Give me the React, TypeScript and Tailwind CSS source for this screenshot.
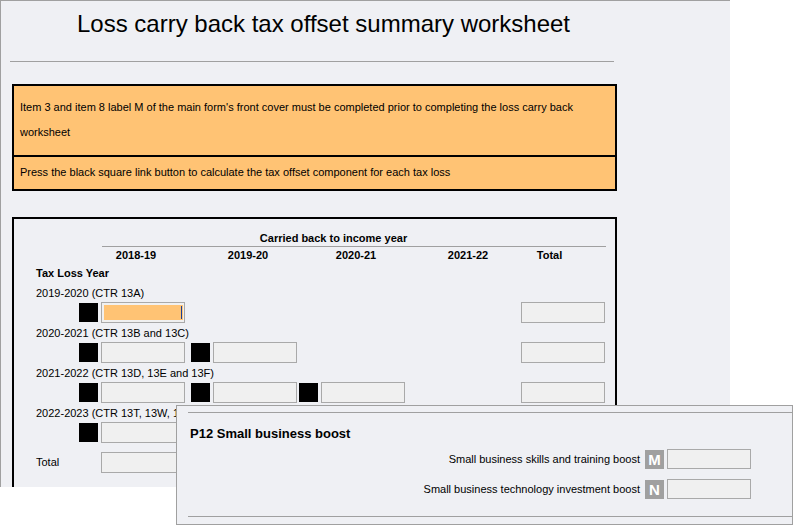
import React from 'react';

const colWidths = ['w-[112px]', 'w-[108px]', 'w-[112px]', 'w-[110px]'];

const rows = [
  { label: '2019-2020 (CTR 13A)', cols: 1 },
  { label: '2020-2021 (CTR 13B and 13C)', cols: 2 },
  { label: '2021-2022 (CTR 13D, 13E and 13F)', cols: 3 },
  { label: '2022-2023 (CTR 13T, 13W, 13X and 13Y)', cols: 4 },
];

function Field({ focused = false }: { focused?: boolean }) {
  return (
    <div className="h-[21px] w-[84px] shrink-0 border border-[#a9a9a9] bg-[#f0f0f0] pl-[2px] pt-[2px] pb-[2px] pr-[1px]">
      {focused && (
        <div className="flex h-full justify-end bg-[#ffc374]">
          <div className="mr-[1px] mt-[1px] h-[13px] w-px bg-[#1c3f94]" />
        </div>
      )}
    </div>
  );
}

function Square() {
  return <div className="h-[19px] w-[19px] shrink-0 bg-black" />;
}

function LabelBox({ letter }: { letter: string }) {
  return (
    <div className="flex h-[19px] w-[19px] shrink-0 items-center justify-center bg-[#a0a0a0] text-[15px] font-bold leading-none text-white">
      {letter}
    </div>
  );
}

export default function App() {
  return (
    <div className="relative h-[525px] w-[793px] overflow-hidden bg-white font-['Liberation_Sans',Arial,sans-serif] text-black">
      {/* Main worksheet panel */}
      <div className="h-[487px] w-[730px] overflow-hidden border-l border-t border-[#a0a0a0] bg-[#eff0f4]">
        <h1 className="mt-[9px] w-[645px] text-center text-[24px] leading-[28px]">
          Loss carry back tax offset summary worksheet
        </h1>
        <div className="ml-[9px] mt-[23px] h-px w-[604px] bg-[#a0a0a0]" />

        {/* Notes */}
        <div className="ml-[11px] mt-[22px] w-[605px] border-2 border-black bg-[#ffc374] text-[11px]">
          <div className="h-[69px] pl-[6px] pt-[9px] leading-[25px]">
            Item 3 and item 8 label M of the main form's front cover must be completed prior to completing the loss carry back
            <br />
            worksheet
          </div>
          <div className="flex h-[34px] items-center border-t-2 border-black pb-[1px] pl-[6px]">
            Press the black square link button to calculate the tax offset component for each tax loss
          </div>
        </div>

        {/* Table */}
        <div className="ml-[11px] mt-[26px] h-[300px] w-[605px] border-2 border-black pt-[12px] text-[11px]">
          <div className="ml-[88px] w-[463px] text-center font-bold leading-[15px]">Carried back to income year</div>
          <div className="ml-[88px] h-px w-[504px] bg-[#a0a0a0]" />
          <div className="flex pl-[65px] font-bold leading-[17px]">
            <div className="w-[114px] text-center">2018-19</div>
            <div className="w-[110px] text-center">2019-20</div>
            <div className="w-[106px] text-center">2020-21</div>
            <div className="w-[118px] text-center">2021-22</div>
            <div className="w-[45px] text-center">Total</div>
          </div>
          <div className="pl-[22px] font-bold leading-[18px]">Tax Loss Year</div>

          <div className="mt-[2px]">
            {rows.map((row, ri) => (
              <div key={row.label} className="mb-px">
                <div className="h-[18px] pl-[22px] leading-[18px]">{row.label}</div>
                <div className="flex h-[21px] items-center pl-[65px]">
                  {colWidths.map((w, ci) => (
                    <div key={w} className={`${w} flex items-center gap-[3px]`}>
                      {ci < row.cols && (
                        <>
                          <Square />
                          <Field focused={ri === 0 && ci === 0} />
                        </>
                      )}
                    </div>
                  ))}
                  <Field />
                </div>
              </div>
            ))}
          </div>

          <div className="mt-[9px] flex h-[21px] items-center">
            <div className="w-[65px] pl-[22px]">Total</div>
            {colWidths.map((w) => (
              <div key={w} className={`${w} flex items-center pl-[22px]`}>
                <Field />
              </div>
            ))}
            <Field />
          </div>
        </div>
      </div>

      {/* P12 overlay window */}
      <div className="absolute left-[176px] top-[405px] h-[120px] w-[617px] border border-[#a0a0a0] bg-[#eff0f4] text-[11px]">
        <div className="ml-[11px] mt-[6px] h-px bg-[#a0a0a0]" />
        <div className="ml-[13px] mt-[13px] text-[13px] font-bold leading-[16px]">P12 Small business boost</div>
        <div className="mt-[7px] flex flex-col items-end gap-[10px] pr-[41px]">
          <div className="flex h-[20px] items-center">
            <span className="mr-[5px] mt-[1px]">Small business skills and training boost</span>
            <LabelBox letter="M" />
            <div className="ml-[3px] h-[20px] w-[84px] border border-[#a9a9a9] bg-[#f0f0f0]" />
          </div>
          <div className="flex h-[20px] items-center">
            <span className="mr-[5px] mt-[1px]">Small business technology investment boost</span>
            <LabelBox letter="N" />
            <div className="ml-[3px] h-[20px] w-[84px] border border-[#a9a9a9] bg-[#f0f0f0]" />
          </div>
        </div>
        <div className="ml-[11px] mt-[17px] h-px bg-[#a0a0a0]" />
      </div>
    </div>
  );
}
